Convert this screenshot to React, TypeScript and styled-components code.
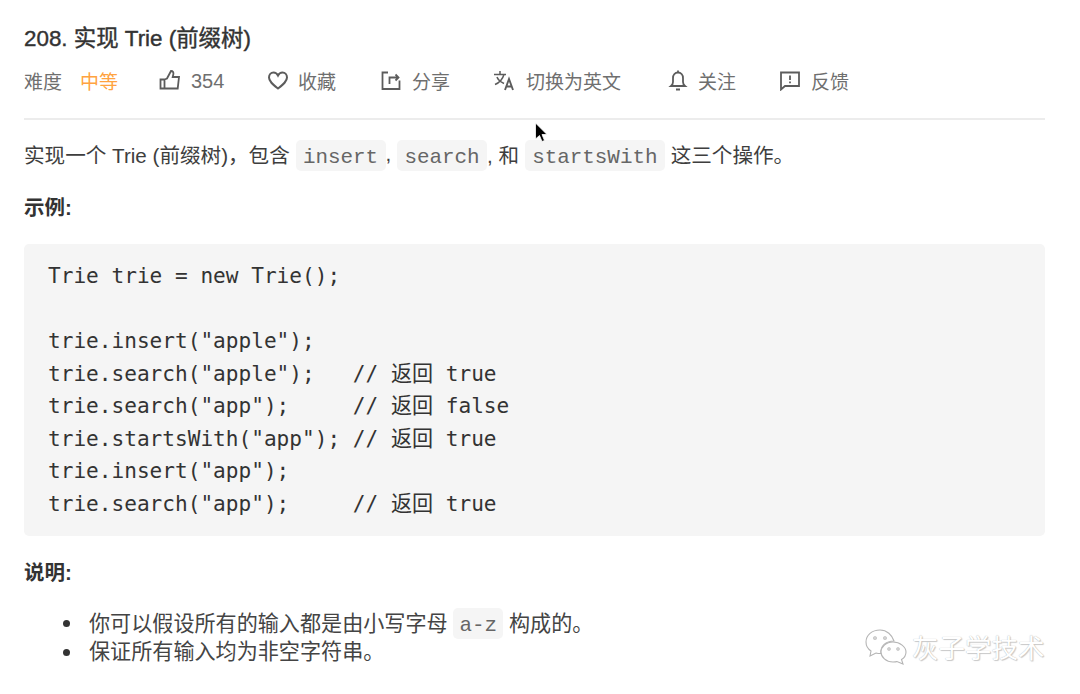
import React from "react";
import styled, { createGlobalStyle } from "styled-components";

const Global = createGlobalStyle`
  html, body { margin: 0; padding: 0; background: #fff; }
`;
const Page = styled.div`
  position: relative;
  width: 1080px;
  height: 694px;
  overflow: hidden;
  box-sizing: border-box;
  padding: 25px 35px 0 24px;
  color: #3a3a3a;
  font-family: "Liberation Sans", "Noto Sans CJK SC", sans-serif;
`;
const Title = styled.h1`
  margin: 0;
  font-size: 22.4px;
  line-height: 28px;
  font-weight: 400;
  -webkit-text-stroke: 0.4px #333;
  color: #333;
`;
const Meta = styled.div`
  display: flex;
  align-items: center;
  height: 32px;
  margin-top: 11px;
  padding-bottom: 22px;
  border-bottom: 2px solid #ececec;
  font-size: 19px;
  color: #6f6f6f;
`;
const MetaItem = styled.span<{ $w: number; $gap?: number }>`
  display: flex;
  align-items: center;
  flex: 0 0 ${(p) => p.$w}px;
  gap: ${(p) => p.$gap ?? 10}px;
`;
const Hard = styled.span`
  color: #ffa340;
  margin-left: 8px;
`;
const Count = styled.span`
  font-size: 20px;
  padding-top: 2px;
`;
const Paragraph = styled.p`
  margin: 17px 0 0;
  display: flex;
  align-items: center;
  height: 34px;
  font-size: 20.6px;
  white-space: pre;
  color: #3e3e3e;
  & > code {
    margin-top: 2px;
  }
`;
const Code = styled.code<{ $pad?: number }>`
  display: inline-block;
  font-family: "Liberation Mono", monospace;
  font-size: 20.9px;
  line-height: 36px;
  height: 31px;
  padding: 0 ${(p) => p.$pad ?? 7.4}px;
  border-radius: 5px;
  background: #f5f5f5;
  color: #666;
`;
const Heading = styled.h2<{ $mt: number }>`
  margin: ${(p) => p.$mt}px 0 0;
  font-size: 20.5px;
  line-height: 28px;
  font-weight: 700;
  color: #333;
`;
const Pre = styled.pre`
  margin: 22px 0 0;
  height: 292px;
  box-sizing: border-box;
  padding: 16px 24px 0;
  background: #f5f5f5;
  border-radius: 5px;
  font-family: "DejaVu Sans Mono", "Noto Sans CJK SC", monospace;
  font-size: 21.1px;
  line-height: 32.5px;
  color: #333;
`;
const List = styled.ul`
  margin: 21px 0 0;
  padding: 0 0 0 65px;
  list-style: none;
  font-size: 21.1px;
  line-height: 29px;
  color: #444;
`;
const Item = styled.li`
  position: relative;
  height: 29px;
  white-space: pre;
  &::before {
    content: "";
    position: absolute;
    left: -26px;
    top: 12px;
    width: 7px;
    height: 7px;
    border-radius: 50%;
    background: #333;
  }
`;
const Watermark = styled.div`
  position: absolute;
  left: 865px;
  top: 627px;
  display: flex;
  align-items: center;
  gap: 5px;
  font-size: 26.5px;
  color: #fff;
  text-shadow: 0 0 1px #aaa, 1px 1px 1px #ccc;
`;
const Cursor = styled.svg`
  position: absolute;
  left: 534px;
  top: 122px;
`;
const Icon = styled.svg<{ $sw?: number }>`
  width: 22px;
  height: 22px;
  fill: none;
  stroke: #5c5c5c;
  stroke-width: ${(p) => p.$sw ?? 1.8};
  flex: none;
`;

const code = `Trie trie = new Trie();

trie.insert("apple");
trie.search("apple");   // 返回 true
trie.search("app");     // 返回 false
trie.startsWith("app"); // 返回 true
trie.insert("app");
trie.search("app");     // 返回 true`;

export default function App() {
  return (
    <Page>
      <Global />
      <Title>208. 实现 Trie (前缀树)</Title>
      <Meta>
        <MetaItem $w={135}>难度<Hard>中等</Hard></MetaItem>
        <MetaItem $w={108}>
          <Icon viewBox="0 0 22 22"><path d="M1.500 10.500h4v9h-4zM5.500 10.500L8 9.500l4-7.500c2 0 2.800 1.500 2.300 3.500L13.700 8H20l-1.300 11.500H5.500" /></Icon>
          <Count>354</Count>
        </MetaItem>
        <MetaItem $w={113} $gap={9}>
          <Icon viewBox="0 0 22 22" $sw={2}><path d="M11 19.500C6 15.500 2 12.500 2 8.500c0-3 2-5 4.500-5 2 0 3.500 1 4.500 3 1-2 2.500-3 4.500-3 2.500 0 4.500 2 4.500 5 0 4-4 7-9 11z" /></Icon>收藏
        </MetaItem>
        <MetaItem $w={113}>
          <Icon viewBox="0 0 22 22"><path d="M8 3.500H2.500V20h17v-8.500M9.500 15V8.500H18M15.500 5.500l3 3-3 3" /></Icon>分享
        </MetaItem>
        <MetaItem $w={174} $gap={11}>
          <Icon viewBox="0 0 22 22" $sw={1.5}><path d="M1 5.500h12M7 2v3.500M11 5.500c-1.500 5-4 8-9 10M4 8c1 3 4 5 7 6.500" /><path d="M12 21l4-11 4 11M13.500 17.500h5" strokeWidth="1.900" /></Icon>切换为英文
        </MetaItem>
        <MetaItem $w={112} $gap={9}>
          <Icon viewBox="0 0 22 22"><path d="M4 17c1.300-1 2-2 2-4V9c0-3 2-5.500 5-5.500s5 2.500 5 5.500v4c0 2 .7 3 2 4zM9 20.500h4M11 1.500v2" /></Icon>关注
        </MetaItem>
        <MetaItem $w={90}>
          <Icon viewBox="0 0 22 22"><path d="M2 3.500h18V17H6l-4 3.500zM11 6.500v4.500M11 12.500v1.800" /></Icon>反馈
        </MetaItem>
      </Meta>
      <Paragraph>实现一个 Trie (前缀树)，包含 <Code>insert</Code>, <Code>search</Code>, 和 <Code>startsWith</Code> 这三个操作。</Paragraph>
      <Heading $mt={23}>示例:</Heading>
      <Pre>{code}</Pre>
      <Heading $mt={23}>说明:</Heading>
      <List>
        <Item>你可以假设所有的输入都是由小写字母 <Code $pad={6}>a-z</Code> 构成的。</Item>
        <Item>保证所有输入均为非空字符串。</Item>
      </List>
      <Cursor width="14" height="22" viewBox="0 0 14 22"><path d="M1.500 1v16l4-3.500 2.500 6 2.500-1-2.500-6h5z" fill="#000" stroke="#fff" strokeWidth="0.8" /></Cursor>
      <Watermark>
        <svg width="42" height="36" viewBox="0 0 42 36" fill="#fff" stroke="#b5b5b5" strokeWidth="1.1">
          <path d="M15 1C7 1 1 6 1 13c0 4 2 7 5 9l-1 5 6-3c2 .5 3 .6 5 .5C15 17 21 12 29 12 27 6 22 1 15 1z" />
          <path d="M28 13c-7 0-12 5-12 10s5 10 12 10c2 0 3 0 4-.500l6 2.500-1.500-4.500C39 29 41 26 41 23c0-5-6-10-13-10z" />
          <circle cx="10" cy="9" r="1.300" /><circle cx="20" cy="9" r="1.300" /><circle cx="24" cy="20" r="1.200" /><circle cx="33" cy="20" r="1.200" />
        </svg>
        灰子学技术
      </Watermark>
    </Page>
  );
}
